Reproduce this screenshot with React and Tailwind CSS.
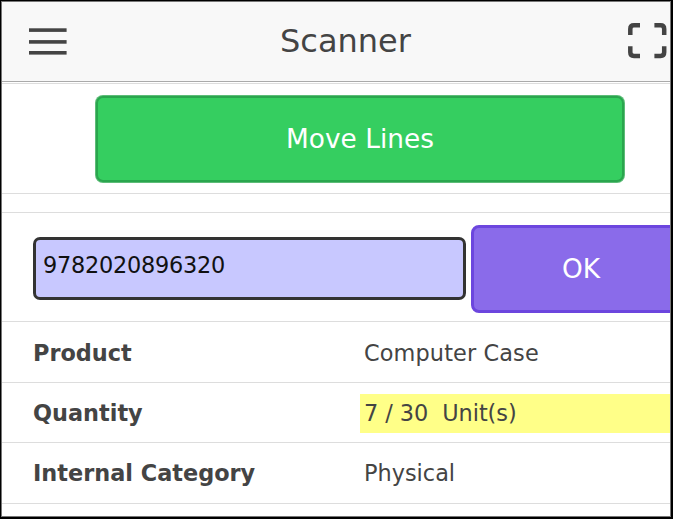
function MenuIcon() {
  return (
    <svg width="39" height="28" viewBox="0 0 39 28" fill="#444">
      <rect x="0" y="0.3" width="37.6" height="3.6" />
      <rect x="0" y="12.1" width="37.6" height="3.6" />
      <rect x="0" y="23" width="37.6" height="3.6" />
    </svg>
  );
}

function FullscreenIcon() {
  return (
    <svg width="39" height="36" viewBox="0 0 39 36" fill="none" stroke="#444" strokeWidth="4.5">
      <path d="M2.3 12V6Q2.3 2.3 6 2.3H12" />
      <path d="M26.4 2.3H32.5Q36.2 2.3 36.2 6V12" />
      <path d="M2.3 23.3V29.3Q2.3 33 6 33H12" />
      <path d="M26.4 33H32.5Q36.2 33 36.2 29.3V23.3" />
    </svg>
  );
}

function Row({ label, children, className }) {
  return (
    <div className={`flex shrink-0 items-center border-b border-[#ddd] pl-[31px] ${className}`}>
      <div className="w-[327px] shrink-0 font-bold">{label}</div>
      {children}
    </div>
  );
}

export default function App() {
  return (
    <div className="h-[519px] w-[673px] overflow-hidden border-t border-r-2 border-b-2 border-l border-black font-['DejaVu_Sans',sans-serif] text-[#444]">
      <div className="flex h-full flex-col overflow-hidden border border-[#777] bg-white text-[22.4px]">
        <header className="flex h-20 shrink-0 items-center border-b border-[#aaa] bg-[#f8f8f8] pl-[27px]">
          <MenuIcon />
          <h1 className="w-[555px] shrink-0 pb-0.5 text-center text-[32px] leading-[40px]">Scanner</h1>
          <div className="ml-[5px] shrink-0 pb-0.5">
            <FullscreenIcon />
          </div>
        </header>
        <div className="mt-px h-px shrink-0 bg-[#ddd]" />
        <div className="flex h-[110px] shrink-0 border-b border-[#ddd] pt-[11px] pl-[93px]">
          <button className="m-px h-[86px] w-[528px] rounded-[7px] border-2 border-[#2aa64e] bg-[#35ce60] text-[26.4px] text-white shadow-[0_0_0_1px_#5dbc78]">
            Move Lines
          </button>
        </div>
        <div className="h-[19px] shrink-0 border-b border-[#ddd]" />
        <div className="flex h-[109px] shrink-0 items-start border-b border-[#ddd] pl-[31px]">
          <input
            className="mt-6 h-[63px] w-[433px] shrink-0 rounded-[7px] border-[3px] border-[#333] bg-[#c8c8ff] px-[7px] pb-2 text-[22.4px] tracking-[-0.25px] text-[#111] outline-none"
            defaultValue="9782020896320"
          />
          <button className="mt-[12px] ml-[4.5px] h-[87.5px] w-[221px] shrink-0 rounded-[8px] border-[3px] border-[#6c46de] bg-[#8a6bea] text-[26.4px] text-white">
            OK
          </button>
        </div>
        <Row label="Product" className="h-[61px] pt-[3px]">
          <div className="px-1 tracking-[0.12px]">Computer Case</div>
        </Row>
        <Row label="Quantity" className="h-[60px] pt-0.5">
          <div className="h-[39px] flex-1 bg-[#ffff88] px-1 leading-[39px] tracking-[-0.06px] whitespace-pre">{"7 / 30  Unit(s)"}</div>
        </Row>
        <Row label="Internal Category" className="h-[61px] pt-0.5">
          <div className="px-1">Physical</div>
        </Row>
      </div>
    </div>
  );
}
